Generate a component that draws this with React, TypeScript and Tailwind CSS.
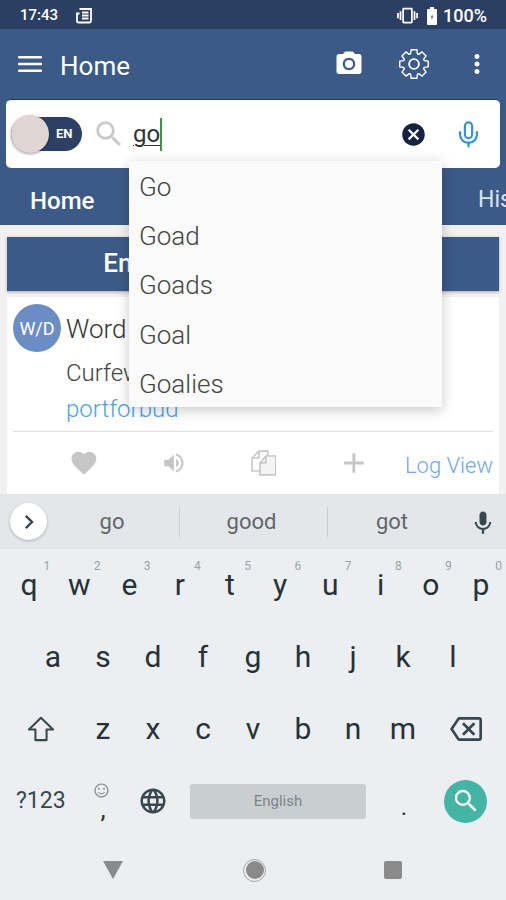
import { MdCameraAlt, MdCancel, MdFavorite, MdKeyboardVoice, MdLanguage, MdMoreVert, MdOutlineBackspace, MdSearch, MdVibration, MdAdd, MdVolumeUp, MdChevronRight, MdOutlineSentimentSatisfied } from 'react-icons/md';
import { Mic } from 'lucide-react';

const row1 = [['q', '1'], ['w', '2'], ['e', '3'], ['r', '4'], ['t', '5'], ['y', '6'], ['u', '7'], ['i', '8'], ['o', '9'], ['p', '0']];
const row2 = ['a', 's', 'd', 'f', 'g', 'h', 'j', 'k', 'l'];
const row3 = ['z', 'x', 'c', 'v', 'b', 'n', 'm'];
const suggestions = ['Go', 'Goad', 'Goads', 'Goal', 'Goalies'];

// eight tooth cog outline
const cogPoints = Array.from({ length: 8 }).flatMap((_, i) => {
  const a = (i * Math.PI) / 4;
  return [
    [a - 0.2, 15.5],
    [a + 0.2, 15.5],
    [a + 0.32, 11.5],
    [a + 0.46, 11.5],
  ].map(([t, r]) => `${(16 + r * Math.sin(t)).toFixed(1)},${(16 - r * Math.cos(t)).toFixed(1)}`);
}).join(' ');

const Key = ({ label, hint }: { label: string; hint?: string }) => (
  <div className="relative flex flex-1 items-center justify-center text-[30px] leading-none text-[#263238]">
    {label}
    {hint && <span className="absolute right-[4px] top-[11px] text-[12px] text-[#9aa1a5]">{hint}</span>}
  </div>
);

export default function App() {
  return (
    <div className="relative flex h-[900px] w-[506px] flex-col overflow-hidden bg-[#f1f1f1] font-['Roboto',sans-serif]">
      {/* status bar */}
      <div className="flex h-[29px] items-center justify-between bg-[#2b3f63] pl-[20px] pr-[19px] pt-[2px] text-white">
        <div className="flex items-center gap-[17px]">
          <span className="text-[15px] font-medium">17:43</span>
          <svg width="18" height="18" viewBox="0 0 18 18" fill="none" stroke="white" strokeWidth="1.8">
            <path d="M4.5 2h11.5v12a1.5 1.5 0 0 1-1.5 1.5H3.5A1.5 1.5 0 0 1 2 14V6.5h2.5" />
            <path d="M7 5.5h6.5M7 8.5h6.5M7 11.5h6.5" />
          </svg>
        </div>
        <div className="flex items-center">
          <MdVibration size={21} />
          <svg width="10" height="18" viewBox="0 0 10 18" className="ml-[9px]" fill="white">
            <path d="M3 0h4v2h2a1 1 0 0 1 1 1v14a1 1 0 0 1-1 1H1a1 1 0 0 1-1-1V3a1 1 0 0 1 1-1h2z" />
            <path d="M5.6 7 3.8 10.4h1.1L4.4 13l1.8-3.4H5.1z" fill="#2b3f63" />
          </svg>
          <span className="ml-[6px] text-[18px] font-medium">100%</span>
        </div>
      </div>

      {/* app bar */}
      <div className="bg-[#3c5a88]">
        <div className="flex h-[70px] items-center pl-[18px] pr-[18px] text-white">
          <svg width="24" height="18" viewBox="0 0 24 18" fill="white">
            <rect y="1" width="24" height="2.6" rx="1" />
            <rect y="7.7" width="24" height="2.6" rx="1" />
            <rect y="14.4" width="24" height="2.6" rx="1" />
          </svg>
          <span className="ml-[18px] flex-1 pt-[4px] text-[26px]">Home</span>
          <MdCameraAlt size={30} />
          <svg width="30" height="30" viewBox="0 0 32 32" className="ml-[35px]" fill="none" stroke="white" strokeWidth="1.5" strokeLinejoin="round">
            <polygon points={cogPoints} />
            <circle cx="16" cy="16" r="5.2" strokeWidth="2" />
          </svg>
          <MdMoreVert size={30} className="ml-[33px] -mr-[4px]" />
        </div>

        {/* search box */}
        <div className="mx-[6px] flex h-[69px] items-center rounded-[5px] border-t border-[#1c3a70] bg-white pl-[5px] pr-[17px]">
          <div className="relative h-[34px] w-[71px] rounded-full bg-[#2b4064]">
            <span className="absolute left-[45px] top-[10px] text-[13px] font-bold leading-none text-white">EN</span>
            <div className="absolute -top-[2px] left-0 h-[38px] w-[38px] rounded-full bg-[#dfd5d3] shadow-[0_1px_3px_rgba(0,0,0,0.4)]" />
          </div>
          <MdSearch size={34} className="ml-[10px] text-[#c9c9c9]" />
          <div className="ml-[7px] flex h-[33px] flex-1 items-center text-[24px] text-[#333333]">
            <span className="underline decoration-1 underline-offset-[3px]">go</span>
            <span className="h-[33px] w-[2px] bg-[#3a9a3a]" />
          </div>
          <MdCancel size={27} className="text-[#14233f]" />
          <Mic size={29} strokeWidth={1.8} className="ml-[27px] text-[#2f8fe6]" />
        </div>

        {/* tabs */}
        <div className="flex h-[57px] items-center justify-between pl-[30px] pt-[8px] text-white">
          <span className="text-[24px] font-medium">Home</span>
          <span className="w-[28px] overflow-hidden text-[23px] text-[#dbe3ef]">History</span>
        </div>
      </div>

      {/* main */}
      <div className="flex flex-1 flex-col px-[7px] pt-[12px]">
        <div className="flex h-[54px] items-center justify-center bg-[#3c5a88] text-[26.2px] font-medium text-white shadow-[0_1px_3px_rgba(0,0,0,0.3)]">
          English Word Dictionaries
        </div>
        <div className="mt-[6px] flex flex-1 flex-col bg-white px-[6px]">
          <div className="flex flex-1">
            <div className="mt-[7px] flex h-[48px] w-[48px] items-center justify-center rounded-full bg-[#6c8cc4] text-[18px] text-white">
              W/D
            </div>
            <div className="ml-[5px]">
              <div className="mt-[17px] text-[26px] font-light leading-[30px] text-[#333333]">Word of the Day</div>
              <div className="mt-[15px] text-[24px] font-light leading-[28px] text-[#444444]">Curfew</div>
              <div className="mt-[8px] text-[24px] font-light leading-[28px] text-[#4f9fee]">portforbud</div>
            </div>
          </div>
          <div className="flex h-[63px] items-center border-t border-[#e0e0e0] pl-[56px] text-[#c6c6c6]">
            <MdFavorite size={30} />
            <MdVolumeUp size={26} className="ml-[62px]" />
            <svg width="26" height="26" viewBox="0 0 26 26" className="ml-[64px]" fill="white" stroke="#c6c6c6" strokeWidth="1.6" strokeLinejoin="round">
              <path d="M1 8 8 1h9v20H1z" />
              <path d="M8 1v7H1" fill="none" />
              <path d="M9 13l6-7h10v19H9z" fill="#f4f4f4" />
              <path d="M15 6v7H9" fill="none" />
            </svg>
            <MdAdd size={34} className="ml-[61px]" />
            <span className="ml-[34px] whitespace-nowrap pt-[4px] text-[22px] font-light text-[#6fa6ee]">Log View</span>
          </div>
        </div>
      </div>

      {/* keyboard */}
      <div className="bg-[#eceff1]">
        <div className="flex h-[55px] items-center bg-[#e3e7e9] text-[22px] text-[#5f6669]">
          <div className="ml-[10px] flex h-[37px] w-[37px] items-center justify-center rounded-full bg-white shadow-[0_1px_3px_rgba(0,0,0,0.25)]">
            <MdChevronRight size={28} className="text-[#37474f]" />
          </div>
          <div className="ml-[14px] w-[118px] pr-[16px] text-center">go</div>
          <div className="h-[30px] w-px bg-[#c8cdd0]" />
          <div className="w-[147px] pr-[4px] text-center">good</div>
          <div className="h-[30px] w-px bg-[#c8cdd0]" />
          <div className="w-[130px] pr-[2px] text-center">got</div>
          <MdKeyboardVoice size={28} className="ml-[11px] text-[#37474f]" />
        </div>

        <div className="flex h-[72px] pl-[4px]">
          {row1.map(([k, n]) => <Key key={k} label={k} hint={n} />)}
        </div>
        <div className="flex h-[72px] px-[28px]">
          {row2.map((k) => <Key key={k} label={k} />)}
        </div>
        <div className="flex h-[72px] items-stretch">
          <div className="flex w-[78px] items-center justify-center pl-[3px]">
            <svg width="28" height="26" viewBox="0 0 30 28" fill="none" stroke="#37474f" strokeWidth="2.2" strokeLinejoin="round">
              <path d="M15 2 2 14.5h7V26h12V14.5h7z" />
            </svg>
          </div>
          <div className="flex flex-1">
            {row3.map((k) => <Key key={k} label={k} />)}
          </div>
          <div className="flex w-[78px] items-center justify-center pr-[2px]">
            <MdOutlineBackspace size={32} className="text-[#37474f]" />
          </div>
        </div>
        <div className="flex h-[72px] items-center">
          <div className="ml-[16px] w-[50px] text-[23px] text-[#37474f]">?123</div>
          <div className="relative ml-[12px] flex h-full w-[50px] items-center justify-center">
            <MdOutlineSentimentSatisfied size={17} className="absolute left-[15px] top-[17px] text-[#8a9296]" />
            <span className="mt-[16px] text-[26px] leading-none text-[#263238]">,</span>
          </div>
          <MdLanguage size={30} className="ml-[10px] text-[#37474f]" />
          <div className="ml-[22px] flex h-[35px] w-[176px] items-center justify-center rounded-[3px] bg-[#c9ced1] text-[15px] text-[#7d8588]">
            English
          </div>
          <div className="ml-[12px] w-[52px] pt-[12px] text-center text-[24px] leading-none text-[#263238]">.</div>
          <div className="ml-[14px] flex h-[43px] w-[43px] items-center justify-center rounded-full bg-[#44b5a5]">
            <MdSearch size={30} className="text-white" />
          </div>
        </div>
        <div className="flex h-[63px] items-center pt-[3px]">
          <div className="ml-[103px] h-0 w-0 border-x-[10px] border-t-[18px] border-x-transparent border-t-[#8a8a8a]" />
          <div className="ml-[120px] flex h-[23px] w-[23px] items-center justify-center rounded-full border border-[#a5a5a5]">
            <div className="h-[18px] w-[18px] rounded-full bg-[#8a8a8a]" />
          </div>
          <div className="ml-[118px] h-[18px] w-[18px] rounded-[2px] bg-[#8a8a8a]" />
        </div>
      </div>

      {/* autocomplete dropdown */}
      <div className="absolute left-[129px] top-[161px] h-[246px] w-[313px] bg-[#fbfbfb] pl-[10px] pt-[2px] shadow-[0_3px_12px_rgba(0,0,0,0.22)]">
        {suggestions.map((s) => (
          <div key={s} className="flex h-[49.2px] items-center text-[26px] font-light text-[#444444]">{s}</div>
        ))}
      </div>
    </div>
  );
}
